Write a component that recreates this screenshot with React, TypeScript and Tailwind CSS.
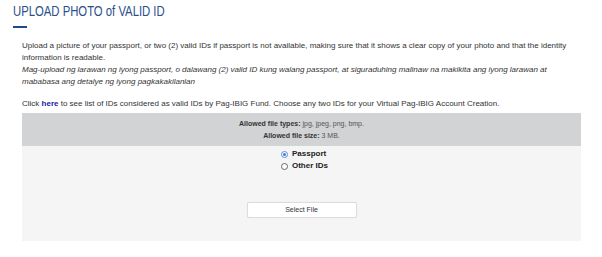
import React from "react";

export default function App() {
  return (
    <div className="w-[602px] h-[257px] bg-white text-[#333] overflow-hidden" style={{ fontFamily: '"Liberation Sans", Arial, sans-serif' }}>
      <div className="pl-[13px] pt-[2px]">
        <h1 className="text-[14.5px] leading-[18px] text-[#2b4f8c] font-normal origin-left scale-x-[0.78] whitespace-nowrap">UPLOAD PHOTO of VALID ID</h1>
        <div className="mt-[6px] w-[14px] h-[2px] bg-[#1f4a8a]" />
      </div>
      <div className="pl-[22px] pr-[20px] mt-[12px] text-[8px] leading-[12px]">
        <p>
          Upload a picture of your passport, or two (2) valid IDs if passport is not available, making sure that it shows a clear copy of your photo and that the identity information is readable.
        </p>
        <p className="italic">
          Mag-upload ng larawan ng iyong passport, o dalawang (2) valid ID kung walang passport, at siguraduhing malinaw na makikita ang iyong larawan at mababasa ang detalye ng iyong pagkakakilanlan
        </p>
        <p className="mt-[10px]">
          Click <span className="font-bold text-[#1a1aa6]">here</span> to see list of IDs considered as valid IDs by Pag-IBIG Fund. Choose any two IDs for your Virtual Pag-IBIG Account Creation.
        </p>
      </div>
      <div className="ml-[22px] mr-[21px] mt-[3px]">
        <div className="bg-[#d1d3d4] h-[33px] flex flex-col items-center justify-center text-[7px] leading-[12px] text-[#555]">
          <div><span className="font-bold text-[#333]">Allowed file types:</span> jpg, jpeg, png, bmp.</div>
          <div><span className="font-bold text-[#333]">Allowed file size:</span> 3 MB.</div>
        </div>
        <div className="bg-[#f5f5f5] h-[95px] flex flex-col items-center pt-[2px]">
          <div className="flex flex-col text-[8px] leading-[12px] font-bold text-[#222] ml-[6px]">
            <label className="flex items-center gap-[4px]">
              <span className="w-[7px] h-[7px] rounded-full border border-[#5a8fd0] bg-white flex items-center justify-center">
                <span className="w-[3px] h-[3px] rounded-full bg-[#3b7ad6]" />
              </span>
              Passport
            </label>
            <label className="flex items-center gap-[4px]">
              <span className="w-[7px] h-[7px] rounded-full border border-[#666] bg-white" />
              Other IDs
            </label>
          </div>
          <button className="mt-[30px] w-[110px] h-[16px] bg-white border border-[#ddd] rounded-[2px] text-[7px] text-[#333] shadow-[0_0_1px_rgba(0,0,0,0.15)]">
            Select File
          </button>
        </div>
      </div>
    </div>
  );
}
